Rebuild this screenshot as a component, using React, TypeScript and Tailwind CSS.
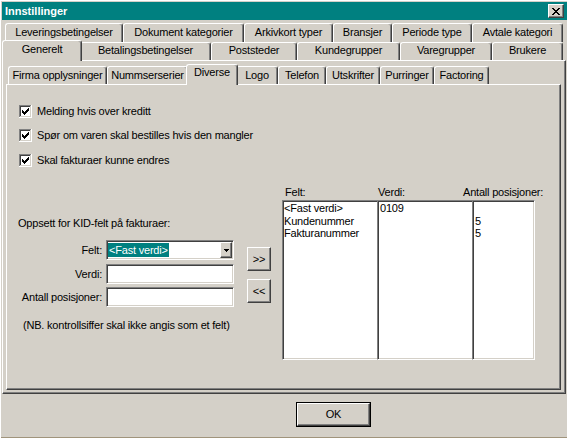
import React from "react";

type T = { label: string; w: string; sw?: string; sel?: boolean };

const row1: T[] = [
  { label: "Leveringsbetingelser", w: "w-[118px]" },
  { label: "Dokument kategorier", w: "w-[121px]" },
  { label: "Arkivkort typer", w: "w-[89px]" },
  { label: "Bransjer", w: "w-[59px]" },
  { label: "Periode type", w: "w-[80px]" },
  { label: "Avtale kategori", w: "w-[91px]" },
];

const row2: T[] = [
  { label: "Generelt", w: "w-[76px]", sw: "w-[80px]", sel: true },
  { label: "Betalingsbetingelser", w: "w-[131px]" },
  { label: "Poststeder", w: "w-[86px]" },
  { label: "Kundegrupper", w: "w-[103px]" },
  { label: "Varegrupper", w: "w-[92px]" },
  { label: "Brukere", w: "w-[71px]" },
];

const subTabs: T[] = [
  { label: "Firma opplysninger", w: "w-[99px]" },
  { label: "Nummserserier", w: "w-[81px]" },
  { label: "Diverse", w: "w-[48px]", sw: "w-[52px]", sel: true },
  { label: "Logo", w: "w-[42px]" },
  { label: "Telefon", w: "w-[48px]" },
  { label: "Utskrifter", w: "w-[54px]" },
  { label: "Purringer", w: "w-[54px]" },
  { label: "Factoring", w: "w-[55px]" },
];

const tabBase =
  "shrink-0 flex justify-center whitespace-nowrap leading-[13px] bg-[#d4d0c8] border-t border-l border-r border-t-white border-l-white border-r-[#404040] shadow-[inset_-1px_0_#808080] rounded-t-[3px]";

const raised =
  "border border-t-white border-l-white border-r-[#404040] border-b-[#404040] shadow-[inset_-1px_-1px_#808080]";

const sunken =
  "bg-white border border-t-[#808080] border-l-[#808080] border-r-white border-b-white shadow-[inset_1px_1px_#404040,inset_-1px_-1px_#d4d0c8]";

function Tab({ t, pt, spt }: { t: T; pt: string; spt: string }) {
  if (t.sel) {
    return (
      <div className={`${tabBase} ${t.sw} ${spt} relative z-10 -mx-[2px] -mb-[1px] h-[21px]`}>
        {t.label}
      </div>
    );
  }
  return <div className={`${tabBase} ${t.w} ${pt} h-full`}>{t.label}</div>;
}

function Check() {
  return (
    <svg width="13" height="13" viewBox="0 0 13 13" shapeRendering="crispEdges" className="shrink-0">
      <rect x="0" y="0" width="13" height="13" fill="#ffffff" />
      <path d="M0 0h12v1H1v11H0z" fill="#808080" />
      <path d="M1 1h10v1H2v9H1z" fill="#404040" />
      <path d="M12 0h1v13H0v-1h12z" fill="#ffffff" />
      <path d="M11 1h1v11H1v-1h10z" fill="#d4d0c8" />
      <path
        d="M9 3h1v1h-1z M8 4h2v1h-2z M3 5h1v1h-1z M7 5h3v1h-3z M3 6h2v1h-2z M6 6h3v1h-3z M3 7h5v1h-5z M4 8h3v1h-3z M5 9h1v1h-1z"
        fill="#000000"
      />
    </svg>
  );
}

function CloseX() {
  return (
    <svg width="8" height="7" viewBox="0 0 8 7" shapeRendering="crispEdges">
      <path
        d="M0 0h2v1H0z M6 0h2v1H6z M1 1h2v1H1z M5 1h2v1H5z M2 2h4v1H2z M3 3h2v1H3z M2 4h4v1H2z M1 5h2v1H1z M5 5h2v1H5z M0 6h2v1H0z M6 6h2v1H6z"
        fill="#000000"
      />
    </svg>
  );
}

function Arrow() {
  return (
    <svg width="5" height="3" viewBox="0 0 5 3" shapeRendering="crispEdges">
      <path d="M0 0h5v1H0z M1 1h3v1H1z M2 2h1v1H2z" fill="#000000" />
    </svg>
  );
}

function CheckRow({ label, mt }: { label: string; mt: string }) {
  return (
    <div className={`flex items-center h-[13px] ${mt}`}>
      <Check />
      <span className="ml-[5px] leading-[13px] whitespace-nowrap">{label}</span>
    </div>
  );
}

export default function App() {
  return (
    <div className="w-[567px] h-[438px] overflow-hidden bg-[#d4d0c8] text-black text-[11px] tracking-[-0.2px] font-['Liberation_Sans',Arial,sans-serif] pl-[2px] pt-[2px] shadow-[inset_1px_1px_#ffffff,inset_0_-1px_#a0947c] flex flex-col">
      {/* Title bar */}
      <div className="w-[565px] h-[18px] shrink-0 bg-[#008080] flex items-center pl-[3px] pr-[3px]">
        <span className="text-white font-bold tracking-normal leading-[13px]">Innstillinger</span>
        <div className={`ml-auto w-[16px] h-[14px] bg-[#d4d0c8] ${raised} flex items-center justify-center`}>
          <CloseX />
        </div>
      </div>

      {/* Tab rows */}
      <div className="ml-[3px] mt-[3px] h-[19px] flex items-end shrink-0">
        {row1.map((t) => (
          <Tab key={t.label} t={t} pt="pt-[2px]" spt="pt-[2px]" />
        ))}
      </div>
      <div className="ml-[2px] h-[18px] flex items-end shrink-0">
        {row2.map((t) => (
          <Tab key={t.label} t={t} pt="pt-[1px]" spt="pt-[2px]" />
        ))}
      </div>

      {/* Outer panel */}
      <div className={`w-[564px] h-[334px] shrink-0 ${raised} pt-[5px] flex flex-col`}>
        <div className="ml-[5px] h-[18px] flex items-end shrink-0">
          {subTabs.map((t) => (
            <Tab key={t.label} t={t} pt="pt-[2px]" spt="pt-[1px]" />
          ))}
        </div>

        {/* Inner panel */}
        <div className={`ml-[3px] w-[555px] h-[306px] shrink-0 ${raised} flex flex-col`}>
          <div className="ml-[12px] mt-[20px] flex flex-col">
            <CheckRow label="Melding hvis over kreditt" mt="mt-0" />
            <CheckRow label="Spør om varen skal bestilles hvis den mangler" mt="mt-[11px]" />
            <CheckRow label="Skal fakturaer kunne endres" mt="mt-[12px]" />
          </div>

          <div className="mt-[19px] flex items-start">
            {/* Left form */}
            <div className="w-[227px] shrink-0 pt-[31px] flex flex-col">
              <div className="pl-[11px] leading-[13px] whitespace-nowrap">Oppsett for KID-felt på fakturaer:</div>
              <div className="mt-[10px] flex items-center">
                <span className="w-[95px] text-right leading-[13px]">Felt:</span>
                <div className={`ml-[4px] w-[128px] h-[20px] ${sunken} flex items-center pl-[1px] pr-[1px]`}>
                  <span className="bg-[#008080] text-white h-[14px] leading-[14px] px-[1px] whitespace-nowrap">
                    &lt;Fast verdi&gt;
                  </span>
                  <div className={`ml-auto w-[12px] h-[16px] bg-[#d4d0c8] ${raised} flex items-center justify-center`}>
                    <Arrow />
                  </div>
                </div>
              </div>
              <div className="mt-[4px] flex items-center">
                <span className="w-[95px] text-right leading-[13px]">Verdi:</span>
                <div className={`ml-[4px] w-[128px] h-[20px] ${sunken}`} />
              </div>
              <div className="mt-[3px] flex items-center">
                <span className="w-[95px] text-right leading-[13px] whitespace-nowrap">Antall posisjoner:</span>
                <div className={`ml-[4px] w-[128px] h-[20px] ${sunken}`} />
              </div>
              <div className="mt-[12px] pl-[16px] leading-[13px] whitespace-nowrap">
                (NB. kontrollsiffer skal ikke angis som et felt)
              </div>
            </div>

            {/* Move buttons */}
            <div className="ml-[13px] mt-[61px] flex flex-col gap-[8px] shrink-0">
              <div className={`w-[24px] h-[24px] ${raised} flex items-center justify-center leading-[13px]`}>&gt;&gt;</div>
              <div className={`w-[24px] h-[24px] ${raised} flex items-center justify-center leading-[13px]`}>&lt;&lt;</div>
            </div>

            {/* Lists */}
            <div className="ml-[11px] flex flex-col shrink-0">
              <div className="flex h-[13px] leading-[13px] whitespace-nowrap">
                <span className="w-[96px] pl-[3px]">Felt:</span>
                <span className="w-[85px]">Verdi:</span>
                <span>Antall posisjoner:</span>
              </div>
              <div className="mt-[1px] flex">
                <div className="w-[95px] h-[160px] bg-white border-t border-l border-b border-t-[#808080] border-l-[#808080] border-b-white shadow-[inset_1px_1px_#404040,inset_0_-1px_#d4d0c8] pl-[1px] pt-[1px] leading-[12.5px] whitespace-nowrap">
                  <div>&lt;Fast verdi&gt;</div>
                  <div>Kundenummer</div>
                  <div>Fakturanummer</div>
                </div>
                <div className="w-[95px] h-[160px] bg-white border-t border-l border-b border-t-[#808080] border-l-[#808080] border-b-white shadow-[inset_1px_1px_#404040,inset_0_-1px_#d4d0c8] pl-[2px] pt-[1px] leading-[12.5px]">
                  <div>0109</div>
                </div>
                <div className={`w-[63px] h-[160px] ${sunken} pl-[2px] pt-[1px] leading-[12.5px]`}>
                  <div className="h-[12.5px]"></div>
                  <div>5</div>
                  <div>5</div>
                </div>
              </div>
            </div>
          </div>
        </div>
      </div>

      {/* OK button */}
      <div className="ml-[294px] mt-[8px] w-[75px] h-[25px] shrink-0 border border-black">
        <div className="w-full h-full border border-t-white border-l-white border-r-[#404040] border-b-[#404040] shadow-[inset_-1px_-1px_#808080] flex items-center justify-center leading-[13px]">
          OK
        </div>
      </div>
    </div>
  );
}
